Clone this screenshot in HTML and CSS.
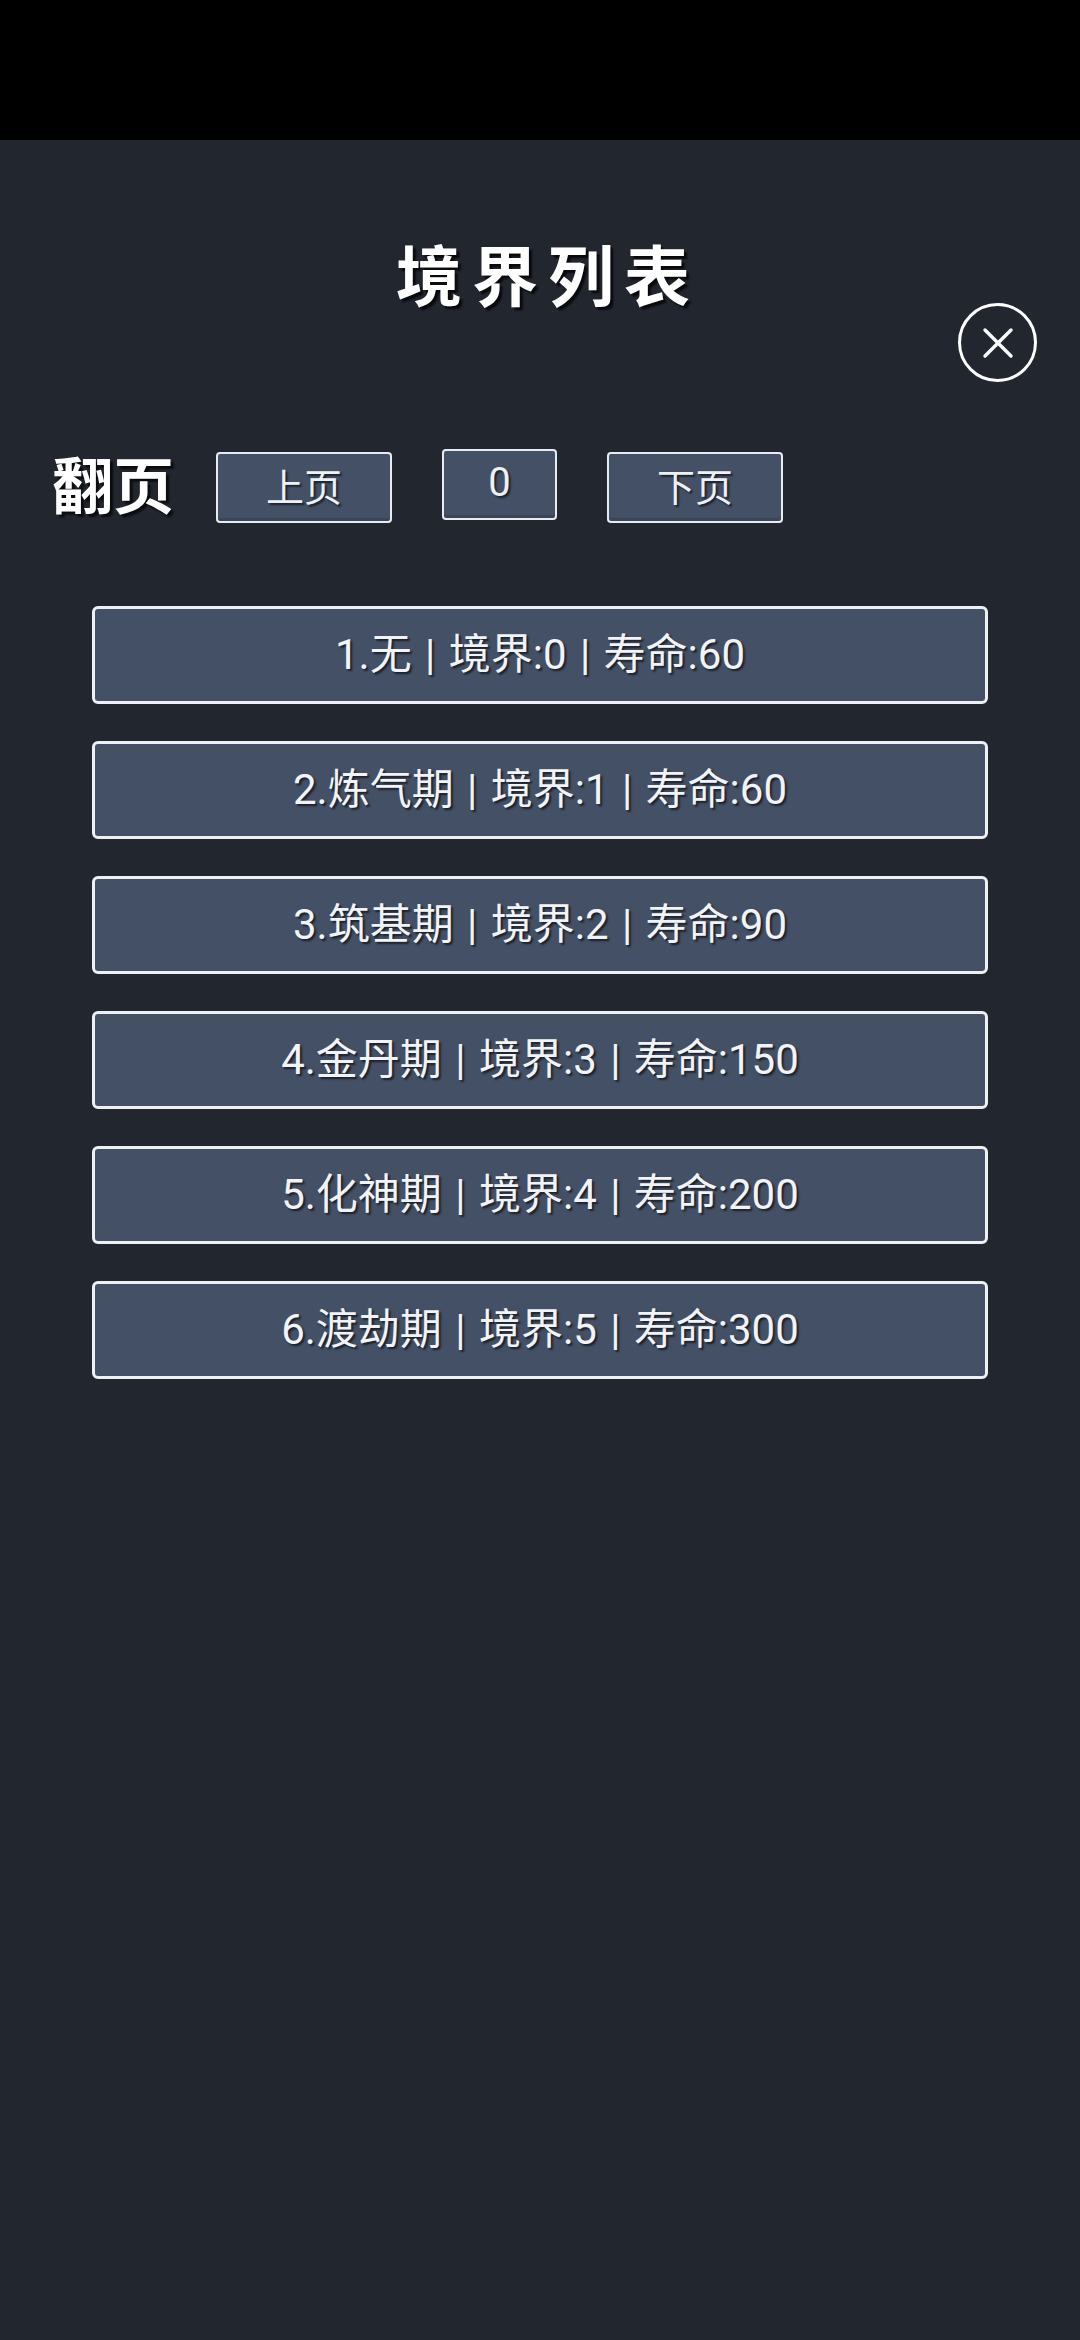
FILE: index.html
```html
<!DOCTYPE html>
<html lang="zh-CN">
	<head>
		<meta charset="utf-8">

		<title>境界列表</title>

		<link rel="stylesheet" href="styles.css">
	</head>
	<body>
	<div class="status-bar"></div>

	<div class="panel">
		<h1 class="title">境界列表</h1>

		<div class="close-row">
			<button class="close" aria-label="关闭">
				<svg viewBox="0 0 32 32" width="32" height="32">
					<path d="M3 3 L29 29 M29 3 L3 29" stroke="#fff" stroke-width="3.4" stroke-linecap="round" fill="none"/>
				</svg>
			</button>
		</div>

		<div class="pager">
			<span class="pager-label">翻页</span>
			<button class="pager-btn">上页</button>
			<div class="pager-num">0</div>
			<button class="pager-btn">下页</button>
		</div>

		<div class="realm-list">
			<div class="realm">1.无 | 境界:0 | 寿命:60</div>
			<div class="realm">2.炼气期 | 境界:1 | 寿命:60</div>
			<div class="realm">3.筑基期 | 境界:2 | 寿命:90</div>
			<div class="realm">4.金丹期 | 境界:3 | 寿命:150</div>
			<div class="realm">5.化神期 | 境界:4 | 寿命:200</div>
			<div class="realm">6.渡劫期 | 境界:5 | 寿命:300</div>
		</div>
	</div>
	</body>
</html>
```

FILE: styles.css
```css
html, body {
	margin: 0;
	background: #22262f;
}

body {
	color: #f1f3f6;
	font-family: Roboto, "Noto Sans CJK SC", sans-serif;
	min-height: 2340px;
}

div.status-bar {
	height: 140px;
	background: #000;
}

div.panel {
	padding-top: 99px;
}

h1.title {
	margin: 0;
	padding-left: 16px;

	font-family: "Noto Sans CJK SC", sans-serif;
	font-size: 66px;
	font-weight: bold;
	line-height: 66px;
	letter-spacing: 10px;
	text-align: center;

	color: #fff;
	text-shadow: 3px 3px 2px rgba(0,0,0,0.75);
}

div.close-row {
	display: flex;
	justify-content: flex-end;
	margin-top: -2px;
	padding-right: 43px;
}

button.close {
	display: flex;
	align-items: center;
	justify-content: center;
	box-sizing: border-box;
	width: 79px;
	height: 79px;
	padding: 0;

	background: transparent;
	border: 3px solid #fff;
	border-radius: 50%;
}

div.pager {
	display: flex;
	align-items: flex-start;
	margin-top: 67px;
	padding-left: 52px;
}

span.pager-label {
	margin-top: 2px;
	margin-right: 42px;

	font-family: "Noto Sans CJK SC", sans-serif;
	font-size: 61px;
	font-weight: bold;
	line-height: 64px;

	color: #fff;
	text-shadow: 3px 3px 2px rgba(0,0,0,0.7);
}

button.pager-btn,
div.pager-num {
	box-sizing: border-box;
	height: 71px;
	padding: 0;

	background: #435066;
	border: 2px solid #e8ebf0;
	border-radius: 4px;
	box-shadow: inset 0 -3px 0 #3a4558;

	color: #eef0f3;
	font-family: Roboto, "Noto Sans CJK SC", sans-serif;
	font-size: 38px;
	line-height: 64px;
	text-align: center;
	text-shadow: 2px 2px 2px rgba(0,0,0,0.6);
}

button.pager-btn {
	width: 176px;
	margin-top: 3px;
}

div.pager-num {
	width: 115px;
	margin: 0 50px;
	font-size: 40px;
}

div.realm-list {
	display: flex;
	flex-direction: column;
	gap: 37px;
	margin-top: 83px;
	padding-left: 92px;
}

div.realm {
	box-sizing: border-box;
	width: 896px;
	height: 98px;

	background: #435065;
	border: 3px solid #eef0f3;
	border-radius: 6px;

	font-size: 42px;
	line-height: 92px;
	text-align: center;
	word-spacing: 3px;

	color: #f1f3f6;
	text-shadow: 2px 2px 2px rgba(0,0,0,0.6);
}
```
